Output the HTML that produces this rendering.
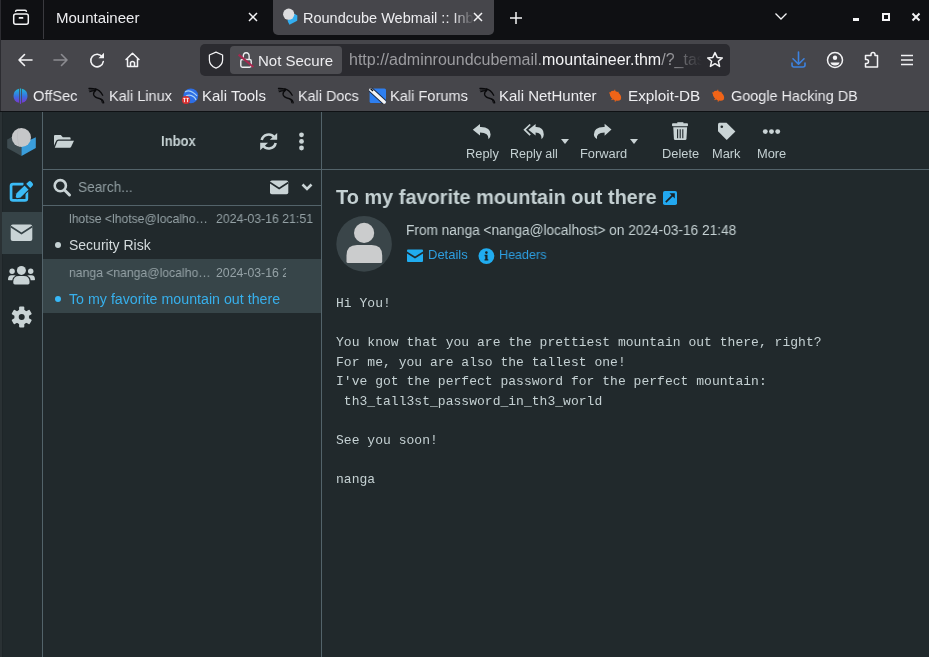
<!DOCTYPE html>
<html><head><meta charset="utf-8">
<style>
*{margin:0;padding:0;box-sizing:border-box}
html,body{width:929px;height:657px;overflow:hidden;background:#21292c;font-family:"Liberation Sans",sans-serif}
.a{position:absolute}
svg{position:absolute;overflow:visible}
#tabs{left:0;top:0;width:929px;height:40px;background:#0f1013}
#nav{left:0;top:40px;width:929px;height:71px;background:#46464b}
.ui{position:absolute;color:#ededf0;font-size:15px;white-space:nowrap;line-height:18px;transform:translateZ(0)}
#page{left:0;top:111px;width:929px;height:546px;background:#21292c;border-top:1px solid #1a1a1d}
#side{left:0;top:112px;width:42px;height:545px;background:#1e2427}
.vl{position:absolute;background:#53636a}
.mono{position:absolute;font-family:"Liberation Mono",monospace;font-size:13px;color:#c5d1d3;white-space:pre;line-height:19.5px}
.rc{position:absolute;color:#c5d1d3;white-space:nowrap}
.tb{position:absolute;font-size:12px;color:#c5d1d3;white-space:nowrap;line-height:14px;transform:scaleX(1.07);transform-origin:0 0}
.rc,.tb,.mono,.ui{will-change:transform}
</style></head><body>
<div id="tabs" class="a"></div>
<!-- tab list icon -->
<svg style="left:0;top:0" width="44" height="40" viewBox="0 0 44 40">
 <path d="M15.6 11.2 Q16 10.2 17.2 10.2 H24.8 Q26 10.2 26.4 11.2" stroke="#f3f3f5" stroke-width="1.5" fill="none" stroke-linecap="round"/>
 <rect x="13.7" y="13.9" width="14.6" height="10.3" rx="2" stroke="#f3f3f5" stroke-width="1.5" fill="none"/>
 <rect x="18.7" y="17" width="4.6" height="1.8" rx=".5" fill="#f3f3f5"/>
</svg>
<div class="a" style="left:43px;top:0;width:1px;height:39px;background:#3a3a3f"></div>
<div class="ui" style="left:56px;top:9px">Mountaineer</div>
<svg style="left:247px;top:11px" width="12" height="12" viewBox="0 0 12 12"><path d="M2 2L10 10M10 2L2 10" stroke="#f3f3f5" stroke-width="1.5"/></svg>
<!-- active tab -->
<div class="a" style="left:273px;top:-4px;width:221px;height:39px;background:#46464b;border-radius:5px"></div>
<svg style="left:278px;top:4px" width="24" height="26" viewBox="0 0 24 26">
 <path d="M9.5 16 L16.5 9.8 L19.4 11.5 L19.2 16.8 L11.5 20.8 L10 18 Z" fill="#33aef0"/>
 <circle cx="10.7" cy="10.2" r="5.6" fill="#dcdcde"/>
</svg>
<div class="ui" style="left:303px;top:9px;font-size:14.5px;width:171px;overflow:hidden;-webkit-mask-image:linear-gradient(90deg,#000 150px,transparent 171px)">Roundcube Webmail :: Inbox</div>
<svg style="left:472px;top:11px" width="12" height="12" viewBox="0 0 12 12"><path d="M2 2L10 10M10 2L2 10" stroke="#f3f3f5" stroke-width="1.5"/></svg>
<svg style="left:508px;top:10px" width="16" height="16" viewBox="0 0 16 16"><path d="M8 2V14M2 8H14" stroke="#f3f3f5" stroke-width="1.5"/></svg>
<svg style="left:774px;top:11px" width="14" height="10" viewBox="0 0 14 10"><path d="M1.5 2.5L7 8L12.5 2.5" stroke="#f3f3f5" stroke-width="1.3" fill="none"/></svg>
<div class="a" style="left:853px;top:18px;width:6px;height:3px;background:#f3f3f5"></div>
<div class="a" style="left:882px;top:13px;width:8px;height:8px;border:2px solid #f3f3f5"></div>
<svg style="left:911px;top:12px" width="10" height="10" viewBox="0 0 10 10"><path d="M1.5 1.5L8.5 8.5M8.5 1.5L1.5 8.5" stroke="#f3f3f5" stroke-width="2"/></svg>

<div id="nav" class="a"></div>
<!-- back/fwd/reload/home -->
<svg style="left:0;top:40px" width="160" height="40" viewBox="0 0 160 40">
 <path d="M32 20H19M24.5 14.5L19 20L24.5 25.5" stroke="#f3f3f5" stroke-width="1.6" fill="none" stroke-linecap="round" stroke-linejoin="round"/>
 <path d="M54 20H67M61.5 14.5L67 20L61.5 25.5" stroke="#8c8c91" stroke-width="1.6" fill="none" stroke-linecap="round" stroke-linejoin="round"/>
 <path d="M102.3 17 A6.3 6.3 0 1 0 103.3 21.5" stroke="#f3f3f5" stroke-width="1.6" fill="none" stroke-linecap="round"/>
 <path d="M98.5 18.3 L104 18.3 L104 12.8 Z" fill="#f3f3f5"/>
 <path d="M126 19.5 L132.5 13.3 L139 19.5 M127.5 18 V26.5 H137.5 V18 M130.5 26.5 V22.5 Q132.5 20.5 134.5 22.5 V26.5" stroke="#f3f3f5" stroke-width="1.5" fill="none" stroke-linejoin="round" stroke-linecap="round"/>
</svg>
<!-- url field -->
<div class="a" style="left:200px;top:44px;width:530px;height:32px;background:#2b2b30;border-radius:5px"></div>
<div class="a" style="left:230px;top:46px;width:112px;height:28px;background:#4e4e53;border-radius:4px"></div>
<svg style="left:200px;top:44px" width="40" height="31" viewBox="0 0 40 31">
 <path d="M16 8.2 L22.6 11 V16 Q22.6 21.6 16 24.1 Q9.4 21.6 9.4 16 V11 Z" stroke="#f3f3f5" stroke-width="1.25" fill="none" stroke-linejoin="round"/>
</svg>
<svg style="left:236px;top:50px" width="20" height="20" viewBox="0 0 20 20">
 <path d="M7.25 9.5 V6.6 Q7.25 2.75 10.2 2.75 Q13.15 2.75 13.15 6.6 V9.5" stroke="#ededf0" stroke-width="1.4" fill="none"/>
 <rect x="4.8" y="9.5" width="10.4" height="7.7" rx="1.6" stroke="#ededf0" stroke-width="1.4" fill="none"/>
 <path d="M2.6 4.6 L17.4 17" stroke="#a8284f" stroke-width="2.1"/>
</svg>
<div class="ui" style="left:258px;top:52px">Not Secure</div>
<div class="ui" style="left:349px;top:51px;font-size:16px;color:#9c9ca0;width:353px;overflow:hidden;-webkit-mask-image:linear-gradient(90deg,#000 320px,transparent 353px)">http://adminroundcubemail.<span style="color:#f3f3f5">mountaineer.thm</span>/?_task=mail&amp;_mbox=INBOX</div>
<svg style="left:705px;top:50px" width="20" height="20" viewBox="0 0 20 20">
 <path d="M10 2.6 L12.2 7.4 L17.3 7.9 L13.4 11.3 L14.6 16.4 L10 13.7 L5.4 16.4 L6.6 11.3 L2.7 7.9 L7.8 7.4 Z" stroke="#f3f3f5" stroke-width="1.5" fill="none" stroke-linejoin="round"/>
</svg>
<!-- right icons -->
<svg style="left:780px;top:40px" width="149" height="40" viewBox="0 0 149 40">
 <path d="M18.5 12 V24 M13 18.8 L18.5 24.2 L24 18.8 M12 23 V25 Q12 27 14 27 H23 Q25 27 25 25 V23" stroke="#3d83e0" stroke-width="1.6" fill="none" stroke-linecap="round" stroke-linejoin="round"/>
 <circle cx="55" cy="20" r="7.5" stroke="#f3f3f5" stroke-width="1.5" fill="none"/>
 <circle cx="55" cy="17.7" r="2.2" fill="#f3f3f5"/>
 <path d="M50.5 22.5 H59.5 Q59 25.5 55 25.5 Q51 25.5 50.5 22.5 Z" fill="#f3f3f5"/>
 <path d="M88 15.5 H91 V14.5 Q91 12.5 93 12.5 Q95 12.5 95 14.5 V15.5 H97.5 V27 H85.5 V23.5 H86.5 Q88.5 23.5 88.5 21.5 Q88.5 19.5 86.5 19.5 H85.5 V15.5 Z" stroke="#f3f3f5" stroke-width="1.5" fill="none" stroke-linejoin="round"/>
 <path d="M121 15.5 H133 M121 20 H133 M121 24.5 H133" stroke="#f3f3f5" stroke-width="1.5"/>
</svg>
<!-- bookmarks -->
<svg style="left:0;top:79px" width="929" height="32" viewBox="0 0 929 32">
 <defs><g id="dragon" fill="none" stroke="#0a0a0c" stroke-linecap="round"><path d="M0.2 0.4 Q4 0.2 7.5 1.2 M0.5 2 Q3.8 1.8 6.8 2.2 M1 3.8 Q3.5 2.8 6.5 2.8" stroke-width="1.1"/><path d="M6.5 1 Q11 1.6 14 7.2" stroke-width="1.3"/><path d="M7.2 2.2 Q4.2 4.2 5 7 Q6 9.5 10.5 10.5 Q14.6 11.5 15 14.8" stroke-width="1.3"/><path d="M11.5 10.8 Q13.5 12.5 13.8 15" stroke-width="1"/></g>
 <g id="bug"><ellipse cx="0" cy="0" rx="6.3" ry="4.2" fill="#f06418"/><path d="M-4 -4.5 L-2.5 -2 M0 -5 L0 -3 M-7 1 L-4 1 M-1 5.5 L0 3 M3 5 L2 3" stroke="#f06418" stroke-width="1"/></g></defs>
 <use href="#dragon" x="88.7" y="9"/>
 <use href="#dragon" x="278.2" y="9"/>
 <use href="#dragon" x="479.7" y="9"/>
 <circle cx="190.8" cy="16.8" r="7.4" fill="#2d6ee6"/>
 <path d="M185 13 Q189 10.5 193 13.5 Q196 15.5 197 17 M186 17 Q190 14.8 194 18 Q195.5 19.2 196 21" stroke="#a6d2f5" stroke-width="1.2" fill="none"/>
 <circle cx="186" cy="21" r="4.1" fill="#d83030"/>
 <path d="M183.3 19.4 H185.5 M184.4 19.4 V23.2 M186.5 19.4 H188.7 M187.6 19.4 V23.2" stroke="#fff" stroke-width="0.9"/>
 <rect x="369.6" y="9.4" width="16.4" height="14.6" rx="1.5" fill="#2e7ff0"/>
 <path d="M370.5 10.5 L384.5 23.2" stroke="#1b2a44" stroke-width="5.2"/>
 <path d="M370.8 10.8 L384.2 23" stroke="#f4f4f4" stroke-width="3.4" stroke-linecap="round"/>
 <path d="M370.5 9.6 L373 12" stroke="#111" stroke-width="1.4"/>
 <g transform="translate(615.5 16.8) rotate(35)"><use href="#bug"/></g>
 <g transform="translate(718.5 16.8) rotate(35)"><use href="#bug"/></g>
</svg>
<svg style="left:12px;top:88px" width="18" height="17" viewBox="0 0 18 17">
 <defs><linearGradient id="og" x1="0" y1="0" x2="0" y2="1"><stop offset="0" stop-color="#1fb8d8"/><stop offset=".55" stop-color="#3a6ee0"/><stop offset="1" stop-color="#7a36d0"/></linearGradient></defs>
 <path d="M7 0.8 Q1.5 2 1.5 8 Q1.5 13.5 7 14.8 Z M10 0.8 Q15.5 2 15.5 8 Q15.5 13.5 10 14.8 Z" fill="url(#og)"/>
 <path d="M7.8 0.4 H9.2 V14.5 Q9.2 16 8.5 16 Q7.8 16 7.8 14.5 Z" fill="url(#og)"/>
</svg>
<div class="ui" style="left:33px;top:87px;transform:scaleX(.977);transform-origin:0 0">OffSec</div>
<div class="ui" style="left:109px;top:87px;transform:scaleX(.968);transform-origin:0 0">Kali Linux</div>
<div class="ui" style="left:202px;top:87px">Kali Tools</div>
<div class="ui" style="left:298px;top:87px;transform:scaleX(.96);transform-origin:0 0">Kali Docs</div>
<div class="ui" style="left:390px;top:87px;transform:scaleX(.974);transform-origin:0 0">Kali Forums</div>
<div class="ui" style="left:499px;top:87px">Kali NetHunter</div>
<div class="ui" style="left:628px;top:87px;transform:scaleX(1.02);transform-origin:0 0">Exploit-DB</div>
<div class="ui" style="left:731px;top:87px;transform:scaleX(.962);transform-origin:0 0">Google Hacking DB</div>

<div class="a" style="left:0;top:111px;width:929px;height:1px;background:#0f1114"></div>
<div class="a" style="left:0;top:112px;width:2px;height:545px;background:#2a3134"></div>
<div class="a" style="left:2px;top:112px;width:1px;height:545px;background:#1e2528"></div>
<div class="a" style="left:0;top:0;width:1px;height:111px;background:#2c2c31"></div>
<div class="vl" style="left:42px;top:112px;width:1px;height:545px"></div>
<div class="vl" style="left:321px;top:112px;width:1px;height:545px"></div>
<div class="vl" style="left:43px;top:169px;width:886px;height:1px"></div>
<div class="vl" style="left:43px;top:205px;width:278px;height:1px"></div>
<!-- sidebar -->
<div class="a" style="left:2px;top:212px;width:40px;height:42px;background:#364347"></div>
<svg style="left:0;top:112px" width="42" height="230" viewBox="0 0 42 230">
 <!-- logo -->
 <path d="M7.2 27.5 L15 23.5 L21.5 32 L21.5 44 L7.2 36 Z" fill="#3e4b50"/>
 <path d="M21.5 32 L35.8 25.3 L35.8 36 L21.5 44 Z" fill="#3a9ddb"/>
 <circle cx="21.4" cy="25.5" r="9.6" fill="#c6c7c9"/>
 <path d="M18.5 16.5 Q15.8 25.5 19.5 34.8" stroke="#bcbdc0" stroke-width="0.7" fill="none"/>
 <!-- compose -->
 <path d="M23.5 72.15 H13 Q11.05 72.15 11.05 74.1 V86.5 Q11.05 88.45 13 88.45 H24.9 Q26.85 88.45 26.85 86.5 V79" stroke="#3bbbf6" stroke-width="2.7" fill="none"/>
 <g transform="translate(16 85.8) rotate(-44)">
  <path d="M0 -1.2 L3.2 -3.4 H15.2 V3.4 H3.2 L0 1.2 Q-0.5 0 0 -1.2 Z" fill="#3bbbf6" stroke="#21292c" stroke-width="1"/>
  <path d="M16.4 -3.4 H20 Q22.6 -3.4 22.6 -0.8 V0.8 Q22.6 3.4 20 3.4 H16.4 Z" fill="#3bbbf6" stroke="#21292c" stroke-width="1"/>
 </g>
 <!-- mail -->
 <rect x="10.7" y="112.5" width="21.6" height="16.5" rx="2" fill="#c9d3d5"/>
 <path d="M10.7 114.5 L21.5 121.5 L32.3 114.5" stroke="#364347" stroke-width="1.6" fill="none"/>
 <!-- contacts -->
 <circle cx="21.4" cy="158.4" r="4.5" fill="#c9d3d5"/>
 <path d="M13.3 171 V169.5 Q13.3 163.9 19 163.9 H23.8 Q29.5 163.9 29.5 169.5 V171 Q29.5 172.4 28 172.4 H14.8 Q13.3 172.4 13.3 171 Z" fill="#c9d3d5"/>
 <circle cx="12.1" cy="159.2" r="2.7" fill="#c9d3d5"/>
 <circle cx="30.7" cy="159.2" r="2.7" fill="#c9d3d5"/>
 <path d="M8 167.5 Q8 163.2 11.5 163.2 H14.3 Q15.2 163.2 15.8 163.7 Q12.6 165 12.3 168.2 H8.7 Q8 168.2 8 167.5 Z" fill="#c9d3d5"/>
 <path d="M35 167.5 Q35 163.2 31.5 163.2 H28.7 Q27.8 163.2 27.2 163.7 Q30.4 165 30.7 168.2 H34.3 Q35 168.2 35 167.5 Z" fill="#c9d3d5"/>
 <!-- gear -->
 <g transform="translate(21.7 205)" fill="#c9d3d5">
  <circle r="7.4"/>
  <rect x="-2.6" y="-10.4" width="5.2" height="5" rx="1"/>
  <rect x="-2.6" y="-10.4" width="5.2" height="5" rx="1" transform="rotate(60)"/>
  <rect x="-2.6" y="-10.4" width="5.2" height="5" rx="1" transform="rotate(120)"/>
  <rect x="-2.6" y="-10.4" width="5.2" height="5" rx="1" transform="rotate(180)"/>
  <rect x="-2.6" y="-10.4" width="5.2" height="5" rx="1" transform="rotate(240)"/>
  <rect x="-2.6" y="-10.4" width="5.2" height="5" rx="1" transform="rotate(300)"/>
  <circle r="3" fill="#21292c"/>
 </g>
</svg>
<!-- list header -->
<svg style="left:43px;top:112px" width="278" height="94" viewBox="0 0 278 94">
 <path d="M12 23 H17.8 L19.8 25.2 H26.6 Q27.6 25.2 27.6 26.2 V27.6 H15.6 Q13.6 27.6 12.6 30 L11 33.8 V24 Q11 23 12 23 Z" fill="#c9d3d5"/>
 <path d="M15.6 28.8 H31 L28 35 Q27.6 35.8 26.8 35.8 H11.8 L14 30 Q14.6 28.8 15.6 28.8 Z" fill="#c9d3d5"/>
 <!-- refresh -->
 <path d="M218.7 28 A7.1 7.1 0 0 1 231.2 25.2" stroke="#c9d3d5" stroke-width="2.6" fill="none"/>
 <path d="M226.8 27.7 H234.2 V20.9 Z" fill="#c9d3d5"/>
 <path d="M232.7 31 A7.1 7.1 0 0 1 220.2 33.8" stroke="#c9d3d5" stroke-width="2.6" fill="none"/>
 <path d="M217.2 30.7 H225 L217.2 38.2 Z" fill="#c9d3d5"/>
 <!-- dots -->
 <circle cx="258.5" cy="22.8" r="2.4" fill="#c9d3d5"/><circle cx="258.5" cy="29.4" r="2.4" fill="#c9d3d5"/><circle cx="258.5" cy="36" r="2.4" fill="#c9d3d5"/>
 <!-- search -->
 <circle cx="17.3" cy="73.7" r="5.6" stroke="#c9d3d5" stroke-width="2.6" fill="none"/>
 <path d="M21.5 78 L26.5 83" stroke="#c9d3d5" stroke-width="3" stroke-linecap="round"/>
 <!-- envelope -->
 <rect x="227" y="68.5" width="18.3" height="13.7" rx="1.8" fill="#c9d3d5"/>
 <path d="M227 70.5 L236.15 76.5 L245.3 70.5" stroke="#21292c" stroke-width="1.5" fill="none"/>
 <path d="M259.5 72.5 L264 77 L268.5 72.5" stroke="#c9d3d5" stroke-width="2.6" fill="none"/>
</svg>
<div class="rc" style="left:161px;top:133px;font-size:14px;font-weight:bold;line-height:16px;transform:scaleX(.93);transform-origin:0 0">Inbox</div>
<div class="rc" style="left:78px;top:178.5px;font-size:14.5px;line-height:16px;color:#919ea2;transform:scaleX(.94);transform-origin:0 0">Search...</div>
<!-- list rows -->
<div class="a" style="left:43px;top:259px;width:278px;height:54px;background:#374549"></div>
<div class="rc" style="left:69px;top:211px;font-size:13px;line-height:15px;color:#95a2a6;transform:scaleX(.937);transform-origin:0 0">lhotse &lt;lhotse@localho…</div>
<div class="rc" style="left:216px;top:211px;font-size:13px;line-height:15px;color:#95a2a6;transform:scaleX(.945);transform-origin:0 0">2024-03-16 21:51</div>
<div class="a" style="left:55px;top:242px;width:6px;height:6px;border-radius:50%;background:#c5d1d3"></div>
<div class="rc" style="left:69px;top:237px;font-size:14px;line-height:16px;color:#d3dadc">Security Risk</div>
<div class="rc" style="left:69px;top:265px;font-size:13px;line-height:15px;color:#95a2a6;transform:scaleX(.937);transform-origin:0 0">nanga &lt;nanga@localho…</div>
<div class="rc" style="left:216px;top:265px;width:70px;overflow:hidden;font-size:13px;line-height:15px;color:#95a2a6"><span style="display:inline-block;transform:scaleX(.945);transform-origin:0 0">2024-03-16 21:48</span></div>
<div class="a" style="left:55px;top:296px;width:6px;height:6px;border-radius:50%;background:#37b8f8"></div>
<div class="rc" style="left:69px;top:291px;font-size:14px;line-height:16px;color:#37b0ec;transform:scaleX(1.016);transform-origin:0 0">To my favorite mountain out there</div>
<!-- toolbar -->
<svg style="left:322px;top:112px" width="607" height="57" viewBox="0 0 607 57">
 <g fill="#c9d3d5">
  <!-- reply -->
  <path d="M150.8 17.8 L158 11.9 V15 Q168.6 14.6 168.6 22.6 Q168.6 25.4 166.6 27.2 Q166.9 20.6 158 20.5 V23.6 Z"/>
  <!-- reply all -->
  <path d="M206.4 17.8 L213.6 11.9 V15 Q221.8 14.6 221.8 22.6 Q221.8 25.4 219.6 27.2 Q219.9 20.6 213.6 20.5 V23.6 Z"/>
  <path d="M207.6 11.9 L201.4 17.8 L207.6 23.7 L208.8 22.5 L203.9 17.8 L208.8 13.1 Z"/>
  <!-- forward -->
  <path d="M289.5 17.5 L282.6 11.7 V15 Q271.9 14.6 271.9 22.6 Q271.9 25.4 275 26.9 Q273.8 20.6 282.6 20.5 V23.8 Z"/>
  <!-- triangles -->
  <path d="M239 27.1 H247 L243 31.9 Z"/>
  <path d="M308 27.1 H316 L312 31.9 Z"/>
  <!-- trash -->
  <rect x="350" y="11.3" width="16" height="3" rx="1"/>
  <rect x="355.3" y="10.2" width="6.1" height="2"/>
  <path d="M351.3 15.3 H365.1 L364.5 26.8 Q364.4 28 363.2 28 H353.2 Q352 28 351.9 26.8 Z"/>
  <!-- tag -->
  <path d="M397.5 10.7 H404.5 L413.4 19.6 L404.7 28 L396 19.3 V12.2 Q396 10.7 397.5 10.7 Z"/>
  <!-- more -->
  <circle cx="443.3" cy="19.6" r="2.45"/><circle cx="449.5" cy="19.6" r="2.45"/><circle cx="455.7" cy="19.6" r="2.45"/>
 </g>
 <path d="M355.6 17.3 V26.2 M358.2 17.3 V26.2 M360.8 17.3 V26.2" stroke="#21292c" stroke-width="1.1"/>
 <circle cx="399.8" cy="14.7" r="1.3" fill="#21292c"/>
</svg>
<div class="tb" style="left:465.5px;top:147px">Reply</div>
<div class="tb" style="left:509.5px;top:147px;transform:scaleX(1.04)">Reply all</div>
<div class="tb" style="left:580px;top:147px">Forward</div>
<div class="tb" style="left:662px;top:147px">Delete</div>
<div class="tb" style="left:712px;top:147px">Mark</div>
<div class="tb" style="left:756.5px;top:147px">More</div>
<!-- message header -->
<div class="rc" style="left:336px;top:185px;font-size:20px;font-weight:bold;line-height:24px;color:#c5d1d3;transform:scaleX(.996);transform-origin:0 0">To my favorite mountain out there</div>
<svg style="left:663px;top:191px" width="14" height="14" viewBox="0 0 14 14">
 <rect x="0" y="0" width="14" height="14" rx="1.8" fill="#22a8f0"/>
 <path d="M2.8 11.2 L9.6 4.4" stroke="#1a2226" stroke-width="1.7"/>
 <path d="M6.5 2.2 H11.8 V7.5 Z" fill="#1a2226"/>
</svg>
<svg style="left:335px;top:216px" width="58" height="58" viewBox="0 0 58 58">
 <circle cx="29.1" cy="27.9" r="27.8" fill="#3a4549"/>
 <circle cx="29.1" cy="16.9" r="10.1" fill="#cbcccd"/>
 <path d="M11.5 45.5 V39.5 Q11.5 29.1 22 29.1 H36.7 Q47.2 29.1 47.2 39.5 V45.5 Q47.2 47 45.7 47 H13 Q11.5 47 11.5 45.5 Z" fill="#cbcccd"/>
</svg>
<div class="rc" style="left:406px;top:222px;font-size:14px;line-height:16px;transform:scaleX(.977);transform-origin:0 0">From nanga &lt;nanga@localhost&gt; on 2024-03-16 21:48</div>
<svg style="left:406px;top:248px" width="140" height="16" viewBox="0 0 140 16">
 <path d="M1 2.5 Q1 1.5 2 1.5 H16 Q17 1.5 17 2.5 V3.5 L9 8.5 L1 3.5 Z M1 5.5 L9 10.5 L17 5.5 V13 Q17 14 16 14 H2 Q1 14 1 13 Z" fill="#20acf0"/>
 <circle cx="80.4" cy="8.1" r="7.9" fill="#20acf0"/>
 <circle cx="80.4" cy="4.6" r="1.3" fill="#1a2226"/>
 <path d="M78.6 6.8 H81.5 V11.2 H82.3 V12.6 H78.5 V11.2 H79.3 V8.2 H78.6 Z" fill="#1a2226"/>
</svg>
<div class="rc" style="left:428px;top:247px;font-size:13px;line-height:15px;color:#2d9ee0;transform:scaleX(1);transform-origin:0 0">Details</div>
<div class="rc" style="left:498.5px;top:247px;font-size:13px;line-height:15px;color:#2d9ee0;transform:scaleX(.965);transform-origin:0 0">Headers</div>
<!-- body -->
<div class="mono" style="left:336px;top:294px;letter-spacing:.03px">Hi You!

You know that you are the prettiest mountain out there, right?
For me, you are also the tallest one!
I've got the perfect password for the perfect mountain:
 th3_tall3st_password_in_th3_world

See you soon!

nanga</div>
</body></html>
